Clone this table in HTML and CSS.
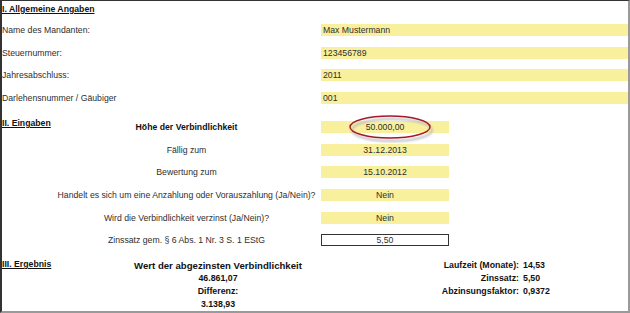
FILE: index.html
```html
<!DOCTYPE html>
<html lang="de">
<head>
<meta charset="utf-8">
<title>Abzinsung Verbindlichkeit</title>
<link rel="stylesheet" href="styles.css">
</head>
<body>
<div class="sheet">
  <section class="sec1">
    <h2 class="sec-title">I. Allgemeine Angaben</h2>
    <div class="grid1">
      <div class="lbl">Name des Mandanten:</div><div class="val">Max Mustermann</div>
      <div class="lbl">Steuernummer:</div><div class="val">123456789</div>
      <div class="lbl">Jahresabschluss:</div><div class="val">2011</div>
      <div class="lbl">Darlehensnummer / Gäubiger</div><div class="val">001</div>
    </div>
  </section>

  <section class="sec2">
    <h2 class="sec-title t2">II. Eingaben</h2>
    <div class="lbl2 bold">Höhe der Verbindlichkeit</div>
    <div class="val2 marked">50.000,00
      <svg class="ring" width="96" height="34" viewBox="0 0 96 34" aria-hidden="true">
        <defs>
          <filter id="sh" x="-20%" y="-40%" width="140%" height="180%">
            <feGaussianBlur stdDeviation="1.2"/>
          </filter>
        </defs>
        <ellipse cx="47" cy="15" rx="40" ry="11" fill="none" stroke="#bdbdbd" stroke-width="2" filter="url(#sh)"/>
        <ellipse cx="45" cy="12" rx="40" ry="11" fill="none" stroke="#a3192b" stroke-width="1.4"/>
      </svg>
    </div>
    <div class="lbl2">Fällig zum</div><div class="val2">31.12.2013</div>
    <div class="lbl2">Bewertung zum</div><div class="val2">15.10.2012</div>
    <div class="lbl2">Handelt es sich um eine Anzahlung oder Vorauszahlung (Ja/Nein)?</div><div class="val2">Nein</div>
    <div class="lbl2">Wird die Verbindlichkeit verzinst (Ja/Nein)?</div><div class="val2">Nein</div>
    <div class="lbl2">Zinssatz gem. § 6 Abs. 1 Nr. 3 S. 1 EStG</div><div class="val2 boxed">5,50</div>
  </section>

  <section class="sec3">
    <h2 class="sec-title t3">III. Ergebnis</h2>
    <div class="result">
      <div class="big">Wert der abgezinsten Verbindlichkeit</div>
      <div>46.861,07</div>
      <div>Differenz:</div>
      <div>3.138,93</div>
    </div>
    <div class="facts">
      <div class="fl">Laufzeit (Monate):</div><div>14,53</div>
      <div class="fl">Zinssatz:</div><div>5,50</div>
      <div class="fl">Abzinsungsfaktor:</div><div>0,9372</div>
    </div>
  </section>
</div>
</body>
</html>
```

FILE: styles.css
```css
* { box-sizing: border-box; }
html, body { margin: 0; padding: 0; background: #fff; }
body {
  font-family: "Liberation Sans", Arial, sans-serif;
  font-size: 8.7px;
  color: #2e2e2e;
}
.sheet {
  width: 630px;
  height: 313px;
  border-top: 1px solid #333;
  border-left: 2px solid #333;
  border-right: 2px solid #9a9a9a;
  border-bottom: 2px solid #9a9a9a;
  overflow: hidden;
}
.sec-title {
  margin: 0;
  font-size: 8.7px;
  font-weight: bold;
  text-decoration: underline;
  color: #111;
  line-height: 12px;
}
.sec1 .sec-title { height: 23px; padding-top: 2px; }
.grid1 {
  display: grid;
  grid-template-columns: 319px 1fr;
  grid-auto-rows: 12px;
  row-gap: 10.67px;
}
.lbl { line-height: 12px; white-space: nowrap; }
.val {
  background: #f9f09d;
  line-height: 12px;
  padding-left: 2px;
}

.sec2 {
  margin-top: 17px;
  display: grid;
  grid-template-columns: 50px 269px 128px;
  grid-auto-rows: 12px;
  row-gap: 10.67px;
}
.t2 { grid-column: 1; grid-row: 1; margin-top: -4px; line-height: 12px; }
.lbl2 { grid-column: 2; text-align: center; line-height: 12px; white-space: nowrap; }
.bold { font-weight: bold; color: #111; }
.val2 {
  grid-column: 3;
  background: #f9f09d;
  text-align: center;
  line-height: 12px;
}
.marked { position: relative; }
.ring { position: absolute; left: 24px; top: -6px; pointer-events: none; }
.boxed {
  background: #fff;
  border: 1px solid #333;
  line-height: 10px;
}

.sec3 {
  margin-top: 13px;
  display: flex;
  align-items: flex-start;
  font-weight: bold;
  color: #111;
}
.t3 { width: 98px; flex: none; line-height: 12px; margin-top: -1px; }
.result {
  width: 236px;
  flex: none;
  text-align: center;
  line-height: 13px;
  font-size: 8.8px;
}
.result .big { font-size: 9.6px; }
.facts {
  margin-left: 2px;
  display: grid;
  grid-template-columns: 181px auto;
  column-gap: 4px;
  line-height: 13px;
  font-size: 8.8px;
}
.fl { text-align: right; }
```
